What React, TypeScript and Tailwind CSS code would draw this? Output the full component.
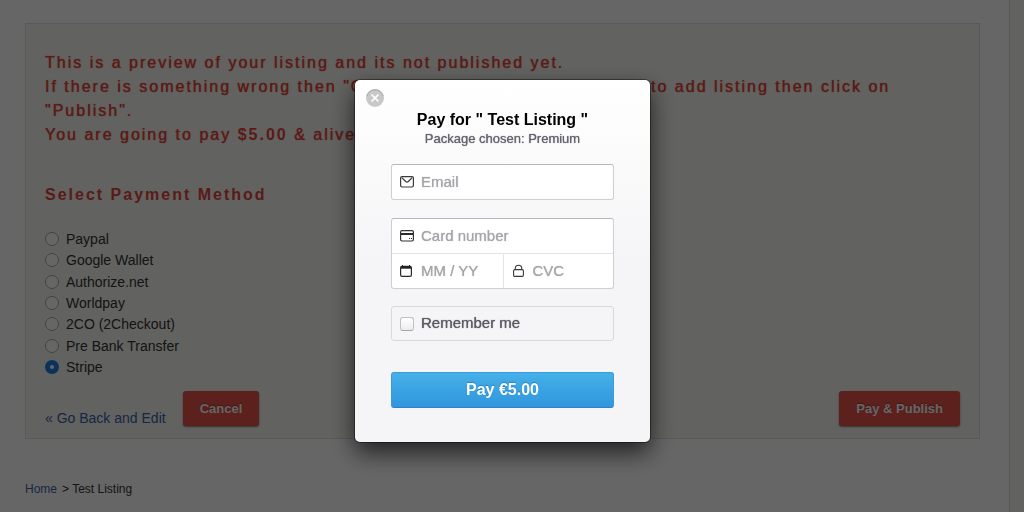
import { useState, type ReactNode } from 'react';

const METHODS = ['Paypal', 'Google Wallet', 'Authorize.net', 'Worldpay', '2CO (2Checkout)', 'Pre Bank Transfer', 'Stripe'];

export default function App() {
  return (
    <div className="min-h-screen flex bg-[#f5f5ef] font-['Liberation_Sans',Arial,sans-serif] text-[#333]">
      <ListingPreview />
      <div className="w-[15px] shrink-0 border-l border-[#d8d8d4]" />
      <CheckoutOverlay />
    </div>
  );
}

function ListingPreview() {
  const [method, setMethod] = useState('Stripe');

  return (
    <main className="flex-1 bg-white pl-[25px] pr-[29px] pt-[23px]">
      <section className="border border-[#dededf] bg-[#f5f5ef] px-[19px] pt-[27px] pb-3">
        <p className="text-base leading-6 tracking-[2px] text-[#e0443c] [text-shadow:0_0_1px_currentColor]">
          This is a preview of your listing and its not published yet.<br />
          If there is something wrong then "Go Back and Edit" or if you want to add listing then click on "Publish".<br />
          You are going to pay <b className="[text-shadow:none]">$5.00</b> &amp; alive days are unlimited.
        </p>

        <h3 className="mt-9 text-base leading-6 font-bold tracking-[2px] text-[#e0443c]">Select Payment Method</h3>

        <div className="mt-[21px] h-[150px] grid grid-rows-7">
          {METHODS.map((name) => (
            <label key={name} className="flex items-center gap-[7px] text-sm">
              <input
                type="radio"
                name="method"
                value={name}
                checked={method === name}
                onChange={() => setMethod(name)}
                className="appearance-none size-[14px] rounded-full border border-[#a8a8ac] bg-white checked:border-[5px] checked:border-[#1c7de0]"
              />
              {name}
            </label>
          ))}
        </div>

        <div className="mt-[13px] flex items-end">
          <a href="#edit" className="mr-[17px] text-sm leading-4 text-[#3b62a8]">« Go Back and Edit</a>
          <RedButton>Cancel</RedButton>
          <div className="flex-1" />
          <RedButton>Pay &amp; Publish</RedButton>
        </div>
      </section>

      <nav className="mt-10 flex gap-[5px] text-xs leading-5">
        <a href="#home" className="text-[#3b62a8]">Home</a>
        <span>&gt; Test Listing</span>
      </nav>
    </main>
  );
}

function RedButton({ children }: { children: ReactNode }) {
  return (
    <button className="h-[35px] rounded-[3px] bg-[#e6524a] px-[17px] text-[13px] font-bold text-white shadow-[0_1px_2px_rgba(0,0,0,0.5)] [text-shadow:0_-1px_1px_rgba(0,0,0,0.3)]">
      {children}
    </button>
  );
}

function CheckoutOverlay() {
  return (
    <div className="fixed inset-0 flex items-start justify-center bg-black/60 pt-20 pr-[19px]">
      <form
        role="dialog"
        aria-label="Checkout"
        onSubmit={(e) => e.preventDefault()}
        className="relative w-[295px] rounded-[5px] bg-linear-to-b from-white to-[#f5f5f7] to-50% px-9 pt-[30px] pb-[34px] shadow-[0_0_0_1px_rgba(0,0,0,0.4),0_10px_24px_rgba(0,0,0,0.7)]"
      >
        <button type="button" aria-label="Close" className="absolute left-[11px] top-[9px]">
          <svg width="18" height="18" viewBox="0 0 18 18" fill="none">
            <circle cx="9" cy="9" r="9" fill="#c8c8c8" />
            <path d="M1 7a8.3 8.3 0 0 1 16 0" stroke="#a8a8a8" />
            <path d="m5.5 5.5 7 7M12.5 5.5l-7 7" stroke="#fff" strokeWidth="1.7" />
          </svg>
        </button>

        <header className="text-center">
          <h1 className="text-base leading-5 font-bold text-black">Pay for " Test Listing "</h1>
          <h2 className="text-[13px] leading-[18px] text-[#63636f] [text-shadow:0_0_1px_currentColor]">Package chosen: Premium</h2>
        </header>

        <div className="mt-4 rounded-[3px] border border-[#cfcfd1] border-t-[#b8b8ba] bg-white">
          <Field label="Email" type="email" icon={<MailIcon />} />
        </div>

        <div className="mt-[18px] rounded-[3px] border border-[#cfcfd1] border-t-[#b8b8ba] bg-white">
          <Field label="Card number" icon={<CardIcon />} />
          <div className="grid grid-cols-2 border-t border-[#e3e3e5]">
            <Field label="MM / YY" icon={<CalendarIcon />} />
            <div className="border-l border-[#e3e3e5]">
              <Field label="CVC" icon={<LockIcon />} />
            </div>
          </div>
        </div>

        <label className="mt-[17px] flex h-[35px] items-center gap-[7px] rounded-[3px] border border-[#d9d9dc] px-2 text-[15px] text-[#5a5a62] [text-shadow:0_0_1px_currentColor]">
          <input
            type="checkbox"
            className="appearance-none size-[14px] rounded-[3px] border border-[#c0c0c3] border-b-[#a5a5a8] bg-linear-to-b from-white to-[#ececee] checked:bg-[#3a9be0]"
          />
          Remember me
        </label>

        <button className="mt-[31px] h-9 w-full rounded-[3px] border border-[#3a9bd8] border-b-[#2c85c8] bg-linear-to-b from-[#45b0e8] to-[#3096de] text-base font-bold text-white [text-shadow:0_-1px_1px_rgba(0,60,120,0.35)]">
          Pay €5.00
        </button>
      </form>
    </div>
  );
}

function Field({ label, icon, type = 'text' }: { label: string; icon: ReactNode; type?: string }) {
  return (
    <label className="flex h-[34px] items-center gap-[7px] px-2">
      {icon}
      <input
        type={type}
        aria-label={label}
        placeholder={label}
        className="w-full min-w-0 bg-transparent text-[15px] text-[#333] outline-none placeholder:text-[#a5a5aa] placeholder:[text-shadow:0_0_1px_currentColor]"
      />
    </label>
  );
}

function MailIcon() {
  return (
    <svg className="shrink-0" width="14" height="14" viewBox="0 0 14 14" fill="none" stroke="#3a3a3c" strokeWidth="1.2">
      <rect x="0.6" y="1.6" width="12.8" height="10.4" rx="1.4" />
      <path d="m1.8 2.6 3.9 3.9q1.3 1.2 2.6 0l3.9-3.9" />
    </svg>
  );
}

function CardIcon() {
  return (
    <svg className="shrink-0" width="14" height="14" viewBox="0 0 14 14" fill="none">
      <rect x="0.6" y="1.6" width="12.8" height="10.4" rx="1.4" stroke="#333335" strokeWidth="1.2" />
      <path d="M1 5h12" stroke="#2a2a2c" strokeWidth="2" />
      <path d="M9 9.5h1M11 9.5h1" stroke="#2a2a2c" />
    </svg>
  );
}

function CalendarIcon() {
  return (
    <svg className="shrink-0" width="14" height="14" viewBox="0 0 14 14" fill="none">
      <rect x="0.6" y="2.4" width="10.8" height="10" rx="1.4" stroke="#2a2a2c" strokeWidth="1.2" />
      <path d="M1 3.5h10" stroke="#222" strokeWidth="2.4" />
      <path d="M2.5 1v2M9.5 1v2" stroke="#222" />
    </svg>
  );
}

function LockIcon() {
  return (
    <svg className="shrink-0" width="14" height="14" viewBox="0 0 14 14" fill="none" stroke="#3a3a3c" strokeWidth="1.1">
      <rect x="1.6" y="5.6" width="9.8" height="6.8" rx="1.2" />
      <path d="M3.3 5.6V4.4a3.2 3.2 0 0 1 6.4 0v1.2" />
    </svg>
  );
}
